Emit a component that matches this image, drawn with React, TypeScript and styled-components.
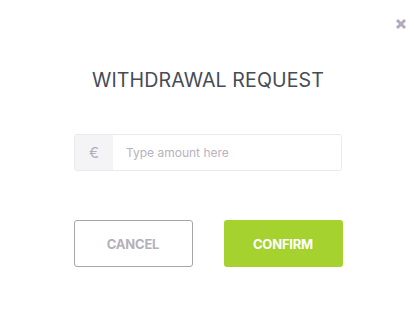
import React from "react";
import styled, { createGlobalStyle } from "styled-components";

const Global = createGlobalStyle`
  html, body { margin: 0; padding: 0; background: #ffffff; }
  body { font-family: "Inter", "Open Sans", sans-serif; }
  * { box-sizing: border-box; }
`;

const Modal = styled.div`
  position: relative;
  width: 414px;
  height: 323px;
  background: #ffffff;
  display: flex;
  flex-direction: column;
  align-items: center;
  padding: 67px 0 0 2px;
`;

const Close = styled.button`
  position: absolute;
  top: 17px;
  right: 6px;
  width: 14px;
  height: 14px;
  padding: 0;
  border: none;
  background: transparent;
  display: flex;
  align-items: center;
  justify-content: center;
  cursor: pointer;
`;

const Title = styled.h2`
  margin: 0;
  font-family: "Inter", sans-serif;
  font-weight: 400;
  font-size: 19.6px;
  line-height: 26px;
  color: #464b55;
  letter-spacing: 0.1px;
`;

const InputGroup = styled.div`
  margin-top: 41px;
  width: 268px;
  height: 37px;
  display: flex;
  border: 1px solid #ebe9ee;
  border-radius: 3px;
  overflow: hidden;
`;

const Addon = styled.span`
  width: 38px;
  flex: none;
  background: #f4f3f6;
  display: flex;
  align-items: center;
  justify-content: center;
  color: #b3aebb;
  font-size: 15px;
  font-family: "Inter", sans-serif;
`;

const Input = styled.input`
  flex: 1;
  border: none;
  outline: none;
  padding: 0 0 0 13px;
  font-family: "Inter", sans-serif;
  font-size: 12px;
  color: #464b55;
  background: #ffffff;
  &::placeholder { color: #b8b2c0; }
`;

const Actions = styled.div`
  margin-top: 49px;
  display: flex;
  gap: 31px;
`;

const Btn = styled.button<{ $primary?: boolean }>`
  width: 119px;
  height: 47px;
  border-radius: 3px;
  font-family: "Inter", sans-serif;
  font-weight: 700;
  font-size: 13px;
  letter-spacing: -0.2px;
  cursor: pointer;
  border: ${(p) => (p.$primary ? "none" : "1px solid #a9a5ad")};
  background: ${(p) => (p.$primary ? "#a5d22e" : "#ffffff")};
  color: ${(p) => (p.$primary ? "#ffffff" : "#b4b0bb")};
`;

export default function App() {
  return (
    <>
      <Global />
      <Modal>
        <Close aria-label="close">
          <svg width="12" height="12" viewBox="0 0 12 12">
            <path d="M2 2 L10 10 M10 2 L2 10" stroke="#b3aabd" strokeWidth="3" strokeLinecap="butt" />
          </svg>
        </Close>
        <Title>WITHDRAWAL REQUEST</Title>
        <InputGroup>
          <Addon>€</Addon>
          <Input placeholder="Type amount here" />
        </InputGroup>
        <Actions>
          <Btn>CANCEL</Btn>
          <Btn $primary>CONFIRM</Btn>
        </Actions>
      </Modal>
    </>
  );
}
